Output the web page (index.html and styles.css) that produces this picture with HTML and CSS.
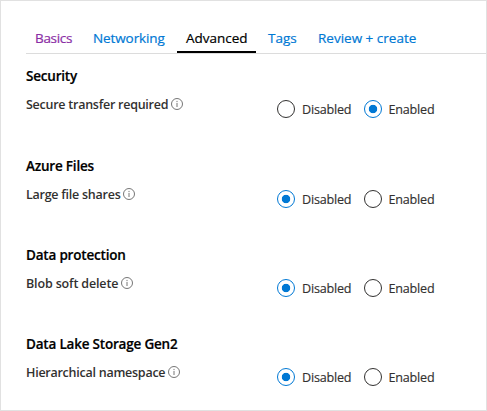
FILE: index.html
```html
<!DOCTYPE html>
<html lang="en">
<head>
<meta charset="utf-8">
<title>Create storage account</title>
<link rel="stylesheet" href="styles.css">
</head>
<body>
<svg class="defs" width="0" height="0" aria-hidden="true">
  <symbol id="info" viewBox="0 0 12 12">
    <circle cx="6" cy="6" r="5.5" fill="none" stroke="#666" stroke-width=".9"/>
    <path d="M6 4.9V9M6 2.9V4" fill="none" stroke="#666" stroke-width=".9"/>
  </symbol>
</svg>
<main class="panel">
  <nav class="tabs">
    <a class="tab basics visited">Basics</a>
    <a class="tab networking">Networking</a>
    <a class="tab advanced active">Advanced</a>
    <a class="tab tags">Tags</a>
    <a class="tab review">Review + create</a>
  </nav>
  <section class="group first">
    <h2>Security</h2>
    <div class="field">
      <div class="label"><span class="name">Secure transfer required</span><svg class="info"><use href="#info"/></svg></div>
      <div class="options">
        <span class="radio"></span><span class="option disabled">Disabled</span>
        <span class="radio on"></span><span class="option">Enabled</span>
      </div>
    </div>
  </section>
  <section class="group">
    <h2>Azure Files</h2>
    <div class="field">
      <div class="label"><span class="name">Large file shares</span><svg class="info"><use href="#info"/></svg></div>
      <div class="options">
        <span class="radio on"></span><span class="option disabled">Disabled</span>
        <span class="radio"></span><span class="option">Enabled</span>
      </div>
    </div>
  </section>
  <section class="group">
    <h2>Data protection</h2>
    <div class="field">
      <div class="label"><span class="name blob">Blob soft delete</span><svg class="info"><use href="#info"/></svg></div>
      <div class="options">
        <span class="radio on"></span><span class="option disabled">Disabled</span>
        <span class="radio"></span><span class="option">Enabled</span>
      </div>
    </div>
  </section>
  <section class="group">
    <h2>Data Lake Storage Gen2</h2>
    <div class="field">
      <div class="label"><span class="name">Hierarchical namespace</span><svg class="info"><use href="#info"/></svg></div>
      <div class="options">
        <span class="radio on"></span><span class="option disabled">Disabled</span>
        <span class="radio"></span><span class="option">Enabled</span>
      </div>
    </div>
  </section>
</main>
</body>
</html>
```
FILE: styles.css
```css
* { box-sizing: border-box; }
body {
  margin: 0;
  background: #fff;
  color: #323130;
  font-family: "Open Sans", "Noto Sans", sans-serif;
  font-size: 13px;
}
.defs { display: block; }
.panel {
  width: 487px;
  height: 411px;
  border: 1px solid #e1e1e1;
  padding: 21px 0 0 25px;
  overflow: hidden;
}
.tabs {
  display: flex;
  height: 32px;
  border-bottom: 1px solid #dcdcdc;
}
.tab {
  height: 31px;
  padding: 6px 0 0 9px;
  font-size: 13.5px;
  line-height: 20px;
  color: #0078d4;
  white-space: nowrap;
  -webkit-text-stroke: .2px currentColor;
}
.basics { width: 58px; letter-spacing: -.3px; }
.networking { width: 93px; letter-spacing: -.1px; }
.advanced { width: 79px; }
.tags { width: 53px; padding-left: 12px; }
.review { padding-left: 9px; }
.visited { color: #8a2da5; }
.active { color: #000; border-bottom: 2px solid #000; }
.group { height: 89px; }
.first { height: 90px; }
h2 {
  margin: 0;
  padding-top: 12px;
  height: 42px;
  font-size: 13.5px;
  font-weight: 600;
  letter-spacing: -.2px;
  line-height: 20px;
  color: #000;
  white-space: nowrap;
  -webkit-text-stroke: .2px currentColor;
}
.field { display: flex; }
.label {
  display: flex;
  width: 251px;
  font-size: 12.5px;
  line-height: 18px;
  font-weight: 600;
  letter-spacing: -.25px;
  white-space: nowrap;
}
.blob { letter-spacing: -.15px; }
.info { width: 12px; height: 12px; margin: 2px 0 0 2.6px; flex: none; }
.options { display: flex; align-items: center; padding-top: 4px; height: 22px; }
.radio {
  width: 18px;
  height: 18px;
  border: 1px solid #323130;
  border-radius: 50%;
  margin-right: 7px;
  flex: none;
}
.on {
  border-color: #0078d4;
  background: radial-gradient(circle, #0078d4 3.8px, transparent 4.6px);
}
.option {
  padding-top: 2px;
  font-size: 12.6px;
  letter-spacing: -.2px;
  line-height: 18px;
  white-space: nowrap;
  -webkit-text-stroke: .15px currentColor;
}
.disabled { width: 61.5px; }
```
